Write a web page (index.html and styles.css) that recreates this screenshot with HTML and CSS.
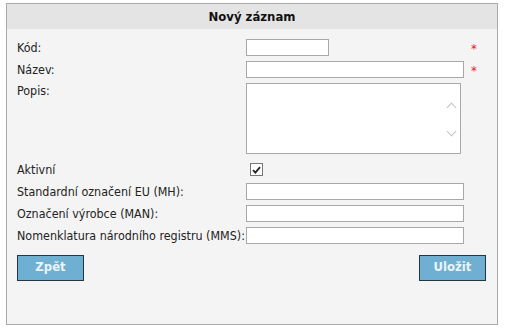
FILE: index.html
```html
<!DOCTYPE html>
<html lang="cs">
<head>
    <meta charset="UTF-8">
    <title>Nový záznam</title>
    <link rel="stylesheet" href="styles.css">
</head>
<body>
    <div class="panel">
        <div class="panel-head">Nový záznam</div>
        <form class="form">
            <div class="row">
                <label>Kód:</label>
                <input type="text" class="short">
                <span class="req">*</span>
            </div>
            <div class="row">
                <label>Název:</label>
                <input type="text">
                <span class="req">*</span>
            </div>
            <div class="row top">
                <label>Popis:</label>
                <div class="area">
                    <span class="arrow up"></span>
                    <span class="arrow down"></span>
                </div>
            </div>
            <div class="row">
                <label>Aktivní</label>
                <span class="check">
                    <svg width="9" height="8" viewBox="0 0 9 8"><path d="M1 4.2 L3.4 6.6 L8 1.2" fill="none" stroke="#222" stroke-width="1.8"/></svg>
                </span>
            </div>
            <div class="row">
                <label>Standardní označení EU (MH):</label>
                <input type="text">
            </div>
            <div class="row">
                <label>Označení výrobce (MAN):</label>
                <input type="text">
            </div>
            <div class="row">
                <label>Nomenklatura národního registru (MMS):</label>
                <input type="text">
            </div>
            <div class="buttons">
                <button type="button" class="btn">Zpět</button>
                <button type="button" class="btn">Uložit</button>
            </div>
        </form>
    </div>
</body>
</html>
```

FILE: styles.css
```css
body {
    margin: 0;
    padding: 3px 7px 6px 6px;
    background: #fff;
    font-family: "DejaVu Sans Condensed", "DejaVu Sans", sans-serif;
    font-size: 12.4px;
    color: #222;
}
.panel {
    height: 322px;
    box-sizing: border-box;
    border: 1px solid #a9a9a9;
    background: #f4f4f4;
}
.panel-head {
    height: 25px;
    line-height: 26px;
    background: #e4e4e4;
    text-align: center;
    font-weight: bold;
    font-size: 13px;
    color: #111;
}
.form {
    padding: 10px 0 0 10px;
}
.row {
    display: grid;
    grid-template-columns: 229px 218px 20px;
    align-items: center;
    height: 17px;
    margin-bottom: 5px;
}
.row.top {
    align-items: start;
    height: 71px;
    margin-bottom: 7px;
}
.row label {
    white-space: nowrap;
}
.row input {
    width: 218px;
    height: 17px;
    box-sizing: border-box;
    border: 1px solid #a8a8a8;
    background: #fff;
    margin: 0;
    padding: 0 2px;
}
.row input.short {
    width: 83px;
}
.req {
    color: #e8202a;
    font-size: 13px;
    padding-left: 7px;
    position: relative;
    top: 1px;
}
.area {
    position: relative;
    width: 215px;
    height: 71px;
    box-sizing: border-box;
    border: 1px solid #a8a8a8;
    background: #fff;
}
.arrow {
    position: absolute;
    right: 5px;
    width: 6px;
    height: 6px;
    border-left: 1.5px solid #c4c4c4;
    border-top: 1.5px solid #c4c4c4;
}
.arrow.up {
    top: 20px;
    transform: rotate(45deg);
}
.arrow.down {
    top: 44px;
    transform: rotate(225deg);
}
.check {
    display: flex;
    align-items: center;
    justify-content: center;
    width: 11px;
    height: 11px;
    margin-left: 4px;
    border: 1px solid #777;
    background: #fff;
}
.buttons {
    display: flex;
    justify-content: space-between;
    width: 469px;
    margin-top: 11px;
}
.btn {
    width: 67px;
    height: 26px;
    background: #6fb0d2;
    border: 1px solid #24363f;
    color: #eaf4f9;
    font-family: "DejaVu Sans Condensed", "DejaVu Sans", sans-serif;
    font-size: 13px;
    font-weight: bold;
    padding: 0 0 4px;
    cursor: pointer;
}
```
